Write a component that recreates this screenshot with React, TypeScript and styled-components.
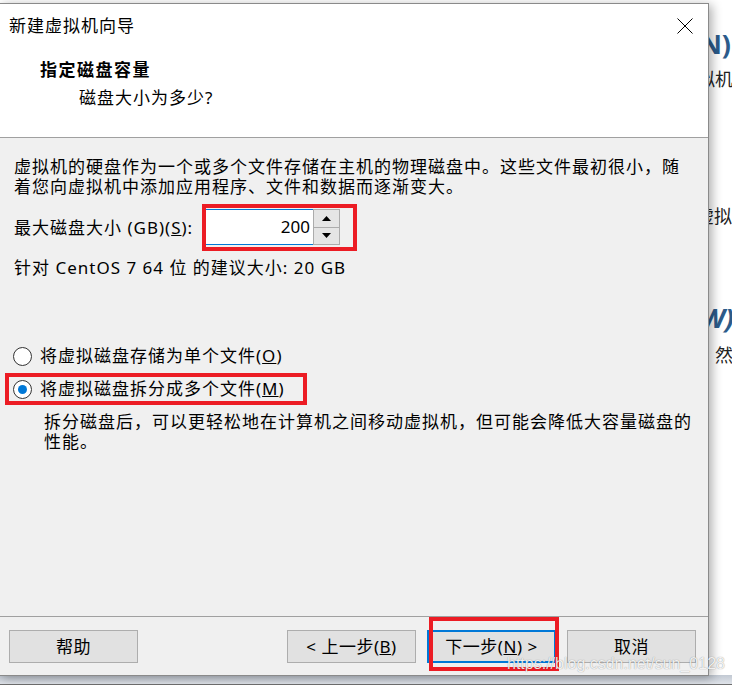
import React from "react";
import styled, { createGlobalStyle } from "styled-components";

const GlobalStyle = createGlobalStyle`
  html, body { margin: 0; padding: 0; background: #ffffff; }
  body { font-family: "Noto Sans", "Noto Sans CJK SC", sans-serif; color: #000; }
  *, *::before, *::after { box-sizing: border-box; }
`;

const Desktop = styled.div`
  position: relative;
  width: 732px;
  height: 685px;
  overflow: hidden;
  background: #ffffff;
`;

/* window sitting behind the dialog (desktop canvas) */
const BackWindow = styled.div`
  position: absolute;
  left: 0;
  top: 0;
  width: 732px;
  height: 685px;
  display: flex;
  flex-direction: column;
  align-items: flex-end;
  background: #ffffff;
`;

const BackHeading = styled.div<{ $top: number; $right: number; $italic?: boolean }>`
  margin-top: ${(p) => p.$top}px;
  margin-right: ${(p) => p.$right}px;
  font-family: "Open Sans", "Noto Sans CJK SC", sans-serif;
  font-weight: 700;
  font-style: ${(p) => (p.$italic ? "italic" : "normal")};
  font-size: 27px;
  line-height: 30px;
  color: #2c5b8a;
  white-space: nowrap;
`;

const BackText = styled.div<{ $top: number; $right: number }>`
  margin-top: ${(p) => p.$top}px;
  margin-right: ${(p) => p.$right}px;
  font-size: 18px;
  line-height: 20px;
  color: #222;
  white-space: nowrap;
`;

const BackBottom = styled.div`
  margin-top: auto;
  align-self: stretch;
  height: 10px;
  background: linear-gradient(#c2c9d3, #dfe3e9);
  border-bottom: 1px solid #6f6f6f;
`;

const Dialog = styled.div`
  position: absolute;
  left: -1px;
  top: 3px;
  width: 710px;
  height: 673px;
  border: 1px solid #8a8a8a;
  background: #f0f0f0;
  display: flex;
  flex-direction: column;
  box-shadow: 3px 2px 10px rgba(0, 0, 0, 0.32);
`;

const Header = styled.div`
  height: 134px;
  background: #ffffff;
  border-bottom: 1px solid #a0a0a0;
  display: flex;
  flex-direction: column;
`;

const TitleRow = styled.div`
  height: 44px;
  display: flex;
  align-items: center;
  justify-content: space-between;
  padding: 0 15px 0 9px;
`;

const Title = styled.div`
  font-size: 17px;
  letter-spacing: 1px;
  line-height: 20px;
`;

const CloseButton = styled.div`
  width: 16px;
  height: 16px;
  display: flex;
`;

const Heading = styled.div`
  margin-top: 12px;
  padding-left: 40px;
  font-size: 17px;
  font-weight: 700;
  letter-spacing: 1.5px;
  line-height: 20px;
`;

const SubHeading = styled.div`
  margin-top: 8px;
  padding-left: 79px;
  font-size: 17px;
  letter-spacing: 1px;
  line-height: 20px;
`;

const Body = styled.div`
  flex: 1;
  display: flex;
  flex-direction: column;
  align-items: flex-start;
  padding: 19px 12px 0 14px;
`;

const Text = styled.p<{ $top?: number; $indent?: number }>`
  margin: ${(p) => p.$top ?? 0}px 0 0 ${(p) => p.$indent ?? 0}px;
  font-size: 17px;
  letter-spacing: 1px;
  line-height: 20px;
`;

const SizeRow = styled.div`
  margin-top: 7px;
  display: flex;
  align-items: center;
`;

const SizeLabel = styled.label`
  width: 188px;
  font-size: 17px;
  letter-spacing: 1px;
  line-height: 20px;
`;

const SpinFrame = styled.div`
  display: flex;
  border: 4px solid #ec1c24;
  padding: 1px 13px 2px 0;
`;

const SpinValue = styled.div`
  width: 107px;
  height: 36px;
  background: #ffffff;
  border-top: 1px solid #0078d7;
  border-bottom: 1px solid #0078d7;
  text-align: right;
  padding-right: 3px;
  font-size: 17px;
  line-height: 33px;
`;

const SpinButtons = styled.div`
  width: 27px;
  height: 36px;
  display: flex;
  flex-direction: column;
`;

const SpinButton = styled.div`
  flex: 1;
  background: #e5e5e5;
  border: 1px solid #acacac;
  display: flex;
  align-items: center;
  justify-content: center;
  & + & {
    border-top: none;
  }
`;

const RadioGroup = styled.div`
  margin-top: 66px;
  display: flex;
  flex-direction: column;
  align-items: flex-start;
  gap: 9px;
`;

const RadioRow = styled.label<{ $highlight?: boolean }>`
  height: 24px;
  margin-left: -5px;
  padding-left: 4px;
  width: ${(p) => (p.$highlight ? "294px" : "auto")};
  display: flex;
  align-items: center;
  gap: 8px;
  outline: ${(p) => (p.$highlight ? "4px solid #ec1c24" : "none")};
  font-size: 17px;
  letter-spacing: 1px;
  line-height: 20px;
`;

const RadioCircle = styled.span`
  width: 19px;
  height: 19px;
  border-radius: 50%;
  border: 1px solid #333333;
  background: #ffffff;
  display: flex;
  align-items: center;
  justify-content: center;
  flex: none;
`;

const RadioDot = styled.span`
  width: 9px;
  height: 9px;
  border-radius: 50%;
  background: #0078d7;
`;

const Footer = styled.div`
  height: 59px;
  border-top: 1px solid #a0a0a0;
  padding: 13px 12px 12px 9px;
  display: flex;
  align-items: flex-start;
`;

const ButtonGroup = styled.div`
  margin-left: auto;
  display: flex;
  gap: 11px;
`;

const Button = styled.div<{ $default?: boolean }>`
  position: relative;
  width: 129px;
  height: 33px;
  background: #e1e1e1;
  border: ${(p) => (p.$default ? "2px solid #0078d7" : "1px solid #adadad")};
  display: flex;
  align-items: center;
  justify-content: center;
  font-size: 17px;
  letter-spacing: 0.5px;
  line-height: 20px;
  white-space: nowrap;
  ${(p) =>
    p.$default
      ? `&::after {
    content: "";
    position: absolute;
    left: 0;
    top: -15px;
    width: 130px;
    height: 54px;
    border: 4px solid #ec1c24;
  }`
      : ""}
`;

const Watermark = styled.div`
  position: absolute;
  left: 507px;
  top: 654px;
  font-family: "Liberation Sans", Arial, sans-serif;
  font-size: 16px;
  line-height: 20px;
  color: rgba(255, 255, 255, 0.88);
  text-shadow: 0 0 1px rgba(0, 0, 0, 0.45);
  white-space: nowrap;
  pointer-events: none;
`;

const Arrow = ({ down }: { down?: boolean }) => (
  <svg width="9" height="5" viewBox="0 0 9 5">
    <path d={down ? "M0 0 H9 L4.5 5 Z" : "M0 5 H9 L4.5 0 Z"} fill="#000" />
  </svg>
);

export default function App() {
  return (
    <>
      <GlobalStyle />
      <Desktop>
        <BackWindow>
          <BackHeading $top={29} $right={1}>(N)</BackHeading>
          <BackText $top={10} $right={-1}>虚拟机</BackText>
          <BackText $top={117} $right={0}>创建虚拟</BackText>
          <BackHeading $top={77} $right={-2} $italic>W)</BackHeading>
          <BackText $top={12} $right={-1}>然</BackText>
          <BackBottom />
        </BackWindow>

        <Dialog>
          <Header>
            <TitleRow>
              <Title>新建虚拟机向导</Title>
              <CloseButton>
                <svg width="16" height="16" viewBox="0 0 16 16">
                  <path d="M0.5 0.5 L15.5 15.5 M15.5 0.5 L0.5 15.5" stroke="#000" strokeWidth="1" fill="none" />
                </svg>
              </CloseButton>
            </TitleRow>
            <Heading>指定磁盘容量</Heading>
            <SubHeading>磁盘大小为多少?</SubHeading>
          </Header>

          <Body>
            <Text>
              虚拟机的硬盘作为一个或多个文件存储在主机的物理磁盘中。这些文件最初很小，随着您向虚拟机中添加应用程序、文件和数据而逐渐变大。
            </Text>
            <SizeRow>
              <SizeLabel>
                最大磁盘大小 (GB)(<u>S</u>):
              </SizeLabel>
              <SpinFrame>
                <SpinValue>200</SpinValue>
                <SpinButtons>
                  <SpinButton>
                    <Arrow />
                  </SpinButton>
                  <SpinButton>
                    <Arrow down />
                  </SpinButton>
                </SpinButtons>
              </SpinFrame>
            </SizeRow>
            <Text $top={7}>针对 CentOS 7 64 位 的建议大小: 20 GB</Text>

            <RadioGroup>
              <RadioRow>
                <RadioCircle />
                <span>
                  将虚拟磁盘存储为单个文件(<u>O</u>)
                </span>
              </RadioRow>
              <RadioRow $highlight>
                <RadioCircle>
                  <RadioDot />
                </RadioCircle>
                <span>
                  将虚拟磁盘拆分成多个文件(<u>M</u>)
                </span>
              </RadioRow>
            </RadioGroup>
            <Text $top={11} $indent={30}>
              拆分磁盘后，可以更轻松地在计算机之间移动虚拟机，但可能会降低大容量磁盘的性能。
            </Text>
          </Body>

          <Footer>
            <Button>帮助</Button>
            <ButtonGroup>
              <Button>
                &lt; 上一步(<u>B</u>)
              </Button>
              <Button $default>
                下一步(<u>N</u>) &gt;
              </Button>
              <Button>取消</Button>
            </ButtonGroup>
          </Footer>
        </Dialog>

        <Watermark>https://blog.csdn.net/sun_0128</Watermark>
      </Desktop>
    </>
  );
}
